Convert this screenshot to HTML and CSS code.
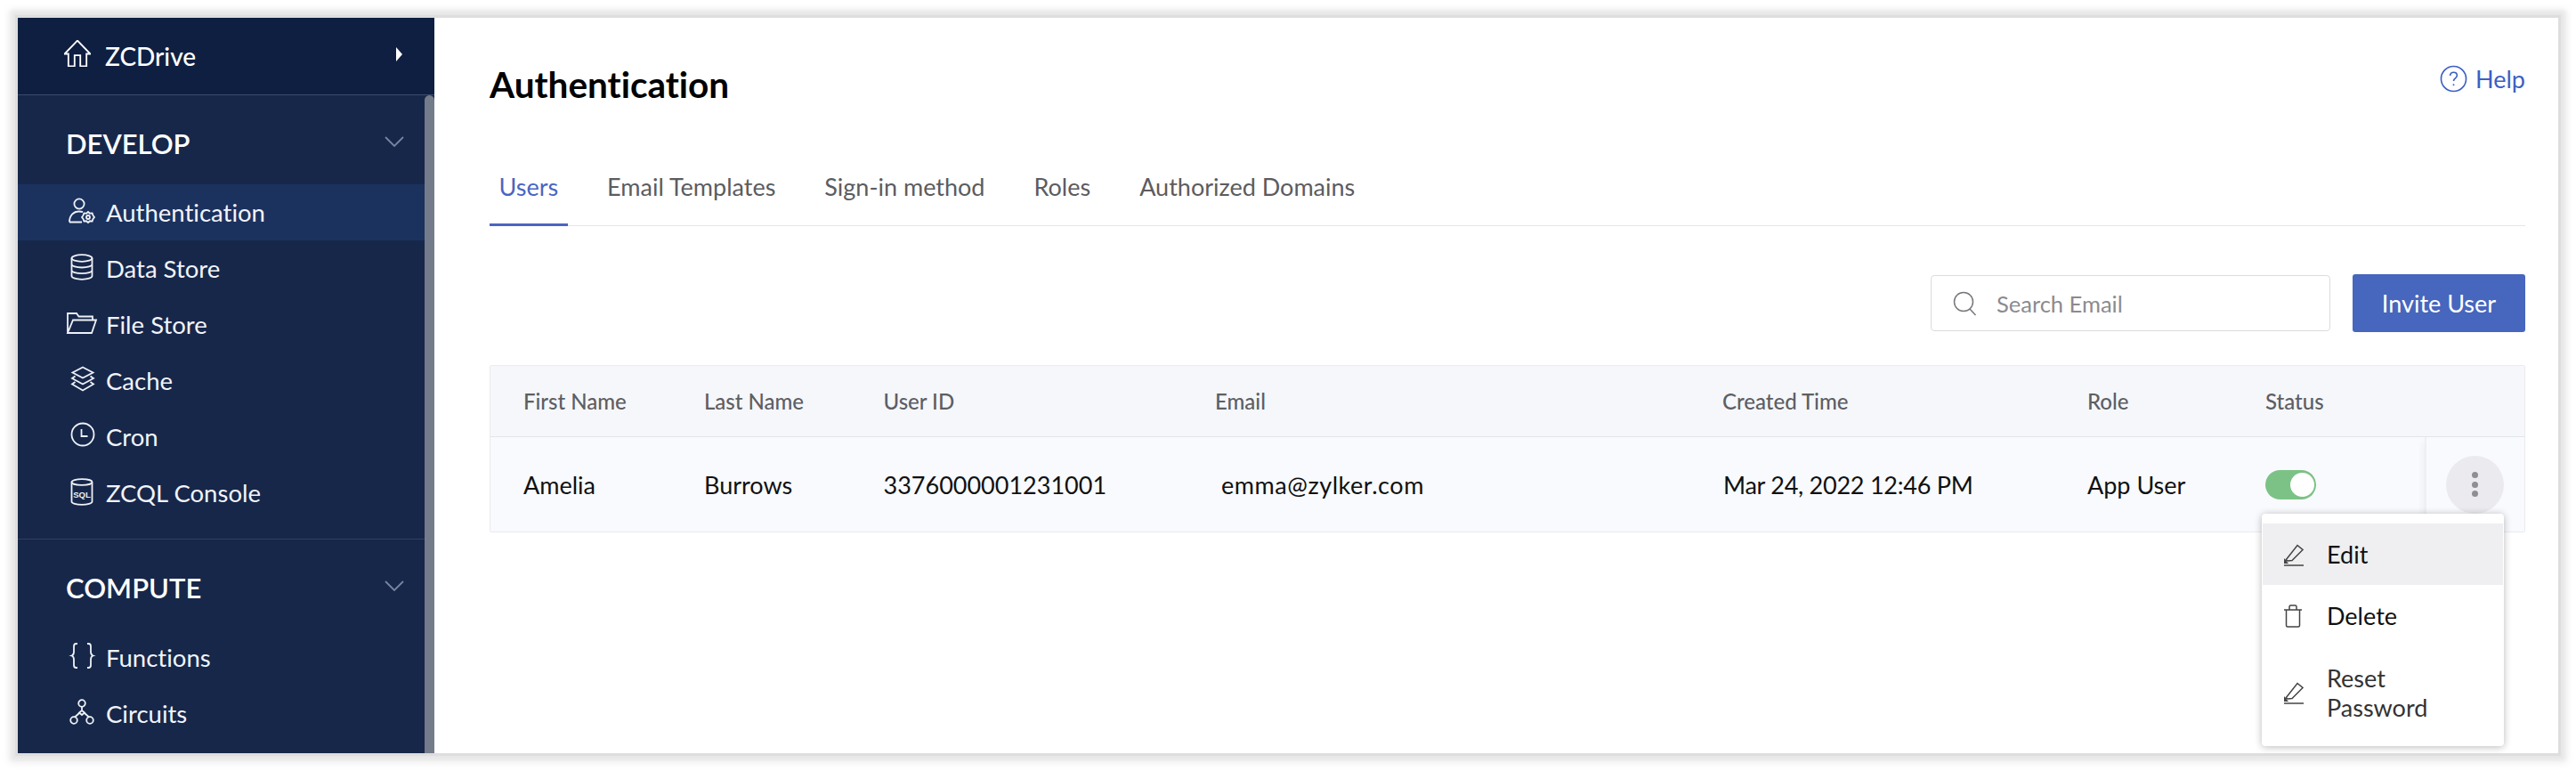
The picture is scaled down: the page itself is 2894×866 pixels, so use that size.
FILE: index.html
```html
<!DOCTYPE html>
<html lang="en">
<head>
<meta charset="utf-8">
<title>Authentication</title>
<link rel="stylesheet" href="styles.css">
</head>
<body>
<div class="window">
  <aside class="sidebar">
    <div class="project">
      <svg class="home-icon" viewBox="1 1 28 28"><path d="M1.500 15.500 15 1.500l13.500 14h-4v13H18V17h-6v11.500H5.500v-13z"/></svg>
      <span class="project-name">ZCDrive</span>
      <span class="caret"></span>
    </div>
    <div class="nav-scroll">
      <div class="thumb"></div>
      <section class="nav-group develop">
        <h2 class="group-title">DEVELOP<svg class="chev" viewBox="0 0 22 12"><path d="M1 1l10 10L21 1"/></svg></h2>
        <a class="nav-item active">
          <svg class="nav-icon" viewBox="0 0 30 30"><circle cx="12" cy="7" r="5.600"/><path d="M1 27.500c0-7.500 4.500-12 11-12 1.500 0 2.800.2 4 .7M1 27.500h14"/><circle cx="22" cy="22" r="2"/><path d="M22 16l2 1.700 2.600-.3.900 2.500 1.500 2.100-1.500 2-.9 2.500-2.600-.2L22 28l-2-1.700-2.600.2-.9-2.500L15 22l1.500-2.100.9-2.500 2.600.3z"/></svg>
          <span>Authentication</span>
        </a>
        <a class="nav-item">
          <svg class="nav-icon" viewBox="0 0 30 30"><ellipse cx="15" cy="5" rx="11.500" ry="3.800"/><path d="M3.500 5v20c0 2.100 5.100 3.800 11.500 3.800S26.500 27.100 26.500 25V5M3.500 11.700c0 2.100 5.100 3.800 11.500 3.800s11.500-1.700 11.500-3.800M3.500 18.400c0 2.100 5.100 3.800 11.500 3.800s11.500-1.700 11.500-3.800"/></svg>
          <span>Data Store</span>
        </a>
        <a class="nav-item">
          <svg class="nav-icon" viewBox="0 0 30 30"><path d="M-1 26V4h10l2.500 3.500H27v4M-1 26l6-14.500h26L26 26z"/></svg>
          <span>File Store</span>
        </a>
        <a class="nav-item">
          <svg class="nav-icon" viewBox="0 0 30 30"><path d="M16 1.500l11.500 6-11.500 6-11.500-6zM7.500 11.500L4 14l12 6.500L28 14l-3.500-2.500M7.500 18L4 20.500 16 27.500l12-7-3.500-2.500"/></svg>
          <span>Cache</span>
        </a>
        <a class="nav-item">
          <svg class="nav-icon" viewBox="0 0 30 30"><circle cx="16" cy="14" r="12.500"/><path d="M14.500 8v8h7"/></svg>
          <span>Cron</span>
        </a>
        <a class="nav-item">
          <svg class="nav-icon" viewBox="0 0 30 30"><ellipse cx="15" cy="4.500" rx="11.500" ry="3.300"/><path d="M3.500 4.500v22c0 1.800 5.100 3.300 11.500 3.300s11.500-1.500 11.500-3.300v-22"/><text class="sql" x="15" y="22" text-anchor="middle">SQL</text></svg>
          <span>ZCQL Console</span>
        </a>
      </section>
      <section class="nav-group compute">
        <h2 class="group-title">COMPUTE<svg class="chev" viewBox="0 0 22 12"><path d="M1 1l10 10L21 1"/></svg></h2>
        <a class="nav-item">
          <svg class="nav-icon" viewBox="0 0 30 30"><path d="M10 1H8.500C6.500 1 6 2 6 4v6c0 2.500-.8 4-2.500 4.500C5.200 15 6 16.500 6 19v6c0 2 .5 3 2.500 3H10M21 1h1.500C24.500 1 25 2 25 4v6c0 2.500.8 4 2.500 4.500-1.700.5-2.500 2-2.500 4.500v6c0 2-.5 3-2.500 3H21"/></svg>
          <span>Functions</span>
        </a>
        <a class="nav-item">
          <svg class="nav-icon" viewBox="0 0 30 30"><circle cx="15" cy="5" r="3.800"/><circle cx="6" cy="24" r="3.800"/><circle cx="24" cy="24" r="3.800"/><path d="M15 9v4M15 13l3 2.500-3 2.500-3-2.500zM12 16l-5 4.500M18 16l5 4.500"/></svg>
          <span>Circuits</span>
        </a>
      </section>
    </div>
  </aside>

  <main class="main">
    <header class="page-head">
      <h1 class="page-title">Authentication</h1>
      <a class="help">
        <svg class="help-icon" viewBox="0 0 32 32"><circle cx="16" cy="16" r="14.500"/><path d="M12 12.500c0-2.500 1.800-4 4-4s4 1.500 4 3.700c0 3-4 3.300-4 6.300"/><circle class="dot" cx="16" cy="23" r="1"/></svg>
        <span>Help</span>
      </a>
    </header>

    <nav class="tabs">
      <a class="tab current">Users</a>
      <a class="tab">Email Templates</a>
      <a class="tab">Sign-in method</a>
      <a class="tab">Roles</a>
      <a class="tab">Authorized Domains</a>
    </nav>

    <div class="toolbar">
      <label class="search">
        <svg class="search-icon" viewBox="0 0 27 27"><circle cx="12" cy="12" r="10.500"/><path d="M19 20l6.500 7"/></svg>
        <span>Search Email</span>
      </label>
      <button class="invite">Invite User</button>
    </div>

    <div class="table">
      <div class="thead">
        <span>First Name</span>
        <span>Last Name</span>
        <span>User ID</span>
        <span>Email</span>
        <span>Created Time</span>
        <span>Role</span>
        <span>Status</span>
      </div>
      <div class="trow">
        <span>Amelia</span>
        <span>Burrows</span>
        <span>3376000001231001</span>
        <span class="cell-email">emma@zylker.com</span>
        <span class="cell-date">Mar 24, 2022 12:46 PM</span>
        <span>App User</span>
        <span class="toggle"><i class="knob"></i></span>
        <div class="actions"><button class="more"><i></i><i></i><i></i></button></div>
      </div>
    </div>

    <div class="menu">
      <div class="menu-item hover">
        <svg class="menu-icon" viewBox="0 0 24 26"><path d="M4 19L17 2.500l6 5L11 19.500l-5 .5zM2 25h22"/><path class="solid" d="M2 17v6h5z"/></svg>
        <span>Edit</span>
      </div>
      <div class="menu-item">
        <svg class="menu-icon trash" viewBox="0 0 24 26"><path d="M2 6h20M4.500 6v17.500c0 1 .5 1.500 1.500 1.500h12c1 0 1.500-.5 1.500-1.500V6M8 6V2.500C8 1.500 8.500 1 9.500 1h5c1 0 1.500.5 1.500 1.500V6"/></svg>
        <span>Delete</span>
      </div>
      <div class="menu-item tall">
        <svg class="menu-icon" viewBox="0 0 24 26"><path d="M4 19L17 2.500l6 5L11 19.500l-5 .5zM2 25h22"/><path class="solid" d="M2 17v6h5z"/></svg>
        <span>Reset<br>Password</span>
      </div>
    </div>
  </main>
</div>
</body>
</html>
```

FILE: styles.css
```css
* { box-sizing: border-box; }

html, body { margin: 0; height: 100%; background: #fff; overflow: hidden; }

body {
  padding: 20px;
  font-family: Lato, "Liberation Sans", sans-serif;
  font-size: 27px;
  font-variant-ligatures: none;
  width: 2894px;
  height: 866px;
}

.window {
  position: relative;
  display: flex;
  width: 2854px;
  height: 826px;
  background: #fff;
  box-shadow: 0 0 0 3px #dedede, 0 0 5px 8px #e6e6e6, 0 1px 9px 11px #f5f5f5;
}

/* sidebar */
.sidebar {
  flex: 0 0 468px;
  display: flex;
  flex-direction: column;
  height: 100%;
  background: #17274a;
  color: #f1f4f9;
  overflow: hidden;
}

.project {
  flex: 0 0 87px;
  display: flex;
  align-items: center;
  padding: 0 36px 0 52px;
  background: #0f1f42;
  border-bottom: 1px solid #3c4b6d;
}

.home-icon { width: 30px; height: 30px; fill: none; stroke: #fff; stroke-width: 1.700; margin-top: -6px; }
.project-name { margin-left: 16px; font-size: 28px; font-weight: 500; color: #fff; }
.caret {
  margin-left: auto;
  margin-top: -4px;
  border-left: 7px solid #fff;
  border-top: 8px solid transparent;
  border-bottom: 8px solid transparent;
}

.nav-scroll { position: relative; flex: 1; overflow: hidden; }

.thumb {
  position: absolute;
  top: 0;
  right: 0;
  bottom: 0;
  width: 11px;
  border-radius: 6px 6px 0 0;
  background: #747b8a;
  z-index: 2;
}

.nav-group { display: flex; flex-direction: column; }
.develop { padding-bottom: 20px; border-bottom: 1px solid #313f61; }

.group-title {
  display: flex;
  align-items: center;
  justify-content: space-between;
  height: 100px;
  margin: 0;
  padding: 8px 34px 0 54px;
  font-size: 31px;
  font-weight: 600;
  color: #fff;
}

.compute .group-title { height: 101px; padding-top: 6px; }

.chev { width: 22px; height: 12px; fill: none; stroke: #77859f; stroke-width: 1.800; margin-top: -4px; }

.nav-item {
  display: flex;
  align-items: center;
  height: 63px;
  padding-left: 57px;
  font-size: 27.500px;
  color: #f1f4f9;
}

.nav-item span { margin-left: 12px; }

.active { background: #1b325f; }

.nav-icon {
  flex: 0 0 30px;
  width: 30px;
  height: 30px;
  margin-top: -4px;
  fill: none;
  stroke: #eef1f6;
  stroke-width: 1.800;
  overflow: visible;
}

.sql { font-family: "Liberation Sans", sans-serif; font-size: 9.500px; font-weight: 700; fill: #eef1f6; stroke: none; }

/* main */
.main {
  position: relative;
  flex: 1;
  min-width: 0;
  padding: 52px 37px 0 62px;
}

.page-head { display: flex; justify-content: space-between; height: 46px; }

.page-title { margin: 0; font-size: 40.500px; line-height: 46px; font-weight: 700; color: #000; }

.help { display: flex; align-items: center; gap: 9px; height: 32px; color: #3d5fc4; font-size: 27px; }
.help-icon { width: 31px; height: 31px; fill: none; stroke: #3d5fc4; stroke-width: 1.700; }
.help-icon .dot { fill: #3d5fc4; stroke: none; }

.tabs {
  display: flex;
  gap: 34px;
  height: 136px;
  align-items: flex-end;
  border-bottom: 1px solid #e6e6e8;
}

.tab {
  display: block;
  padding: 0 10.500px 22px;
  line-height: 38px;
  margin-bottom: -1px;
  border-bottom: 3px solid transparent;
  font-size: 27px;
  color: #5c5c60;
}

.tab.current { color: #4a66c2; border-bottom-color: #4a66c2; }

.toolbar { display: flex; justify-content: flex-end; align-items: center; gap: 25px; margin-top: 54px; }

.search {
  display: flex;
  align-items: center;
  gap: 22px;
  width: 449px;
  height: 63px;
  padding-left: 24px;
  border: 1px solid #dcdcde;
  border-radius: 4px;
  color: #8b8b90;
  font-size: 25.500px;
}

.search-icon { width: 27px; height: 27px; fill: none; stroke: #77777c; stroke-width: 1.500; overflow: visible; }

.invite {
  width: 194px;
  height: 65px;
  border: 0;
  border-radius: 3px;
  background: #4766bd;
  color: #fff;
  font-family: inherit;
  font-size: 27px;
}

/* table */
.table { margin-top: 37px; border: 1px solid #e9ebef; border-radius: 2px; }

.thead, .trow {
  display: grid;
  grid-template-columns: 203px 201.500px 372.500px 570px 410px 200px 179px 1fr;
  align-items: center;
  padding-left: 37px;
}

.thead {
  height: 80px;
  background: #f5f7fa;
  border-bottom: 1px solid #e1e5ea;
  font-size: 24px;
  font-weight: 500;
  color: #5e5e64;
}

.trow {
  height: 106px;
  background: #f8fafd;
  color: #111;
  font-size: 27px;
}

.cell-email { margin-left: 7px; letter-spacing: .55px; }
.cell-date { margin-left: 1px; letter-spacing: -.25px; }

.toggle {
  position: relative;
  display: block;
  width: 57px;
  height: 33px;
  border-radius: 17px;
  background: #7cc286;
}

.knob {
  position: absolute;
  top: 3px;
  right: 2px;
  width: 27px;
  height: 27px;
  border-radius: 50%;
  background: #fff;
}

.actions {
  display: flex;
  justify-content: flex-end;
  align-items: center;
  align-self: stretch;
  padding-right: 23px;
  border-left: 2px solid #eef0f4;
  box-shadow: -6px 0 8px -6px #e6e8ee;
}

.more {
  display: flex;
  flex-direction: column;
  align-items: center;
  justify-content: center;
  gap: 3.500px;
  width: 65px;
  height: 65px;
  padding: 0;
  border: 0;
  border-radius: 50%;
  background: #ebebef;
}

.more i { width: 7px; height: 7px; border-radius: 50%; background: #8e8e93; }

/* dropdown */
.menu {
  position: absolute;
  top: 557px;
  left: 2053px;
  width: 272px;
  height: 261px;
  padding: 11px 1px 0;
  background: #fff;
  border-radius: 4px;
  box-shadow: 0 1px 8px rgba(0, 0, 0, .28);
  color: #111;
  z-index: 3;
}

.menu-item {
  display: flex;
  align-items: center;
  height: 69px;
  padding-left: 22px;
  line-height: 33px;
  font-size: 27px;
}

.menu-item span { margin-left: 26px; }
.menu-item.hover { background: #efeff1; }
.menu-item.tall { height: 103px; margin-top: 0; color: #333; }

.menu-icon { flex: 0 0 24px; width: 24px; height: 26px; fill: none; stroke: #444; stroke-width: 1.500; }
.menu-icon .solid { fill: #444; stroke: none; }
```
